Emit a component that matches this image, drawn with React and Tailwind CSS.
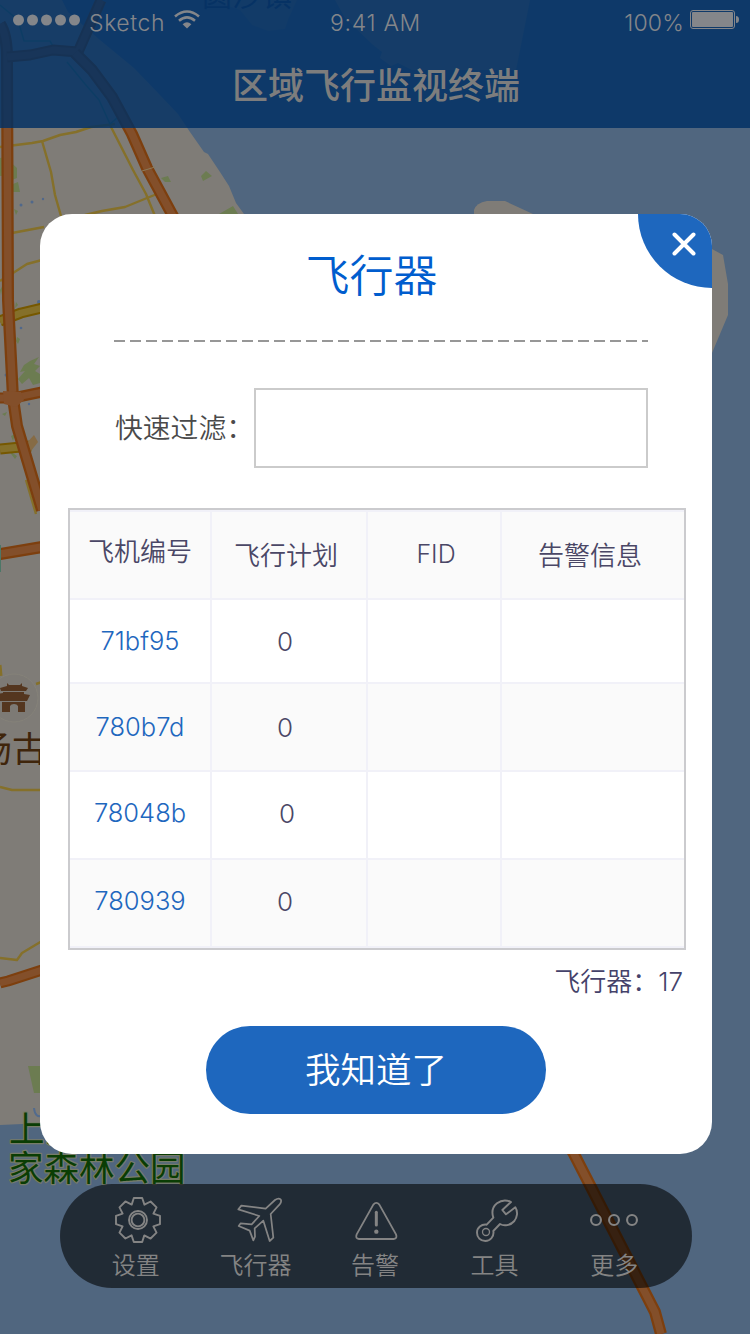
import React from "react";

const SANS = "font-['Inter','Noto_Sans_CJK_SC',sans-serif]";

const gearPoints = Array.from({ length: 8 }, (_, i) => {
  const a = (i * Math.PI) / 4;
  return [[-6.3, -15.4], [-4.2, -22], [4.2, -22]]
    .map(([x, y]) => `${(x * Math.cos(a) - y * Math.sin(a)).toFixed(2)},${(x * Math.sin(a) + y * Math.cos(a)).toFixed(2)}`)
    .join(" ");
}).join(" ");

function Road({ d, width = 9, core = "#834f2a", edge = "#7d3f0e" }) {
  return (
    <g fill="none" strokeLinejoin="round">
      <path d={d} stroke={edge} strokeWidth={width} />
      <path d={d} stroke={core} strokeWidth={width * 0.62} />
    </g>
  );
}

function MapBackdrop() {
  return (
    <svg className="absolute inset-0" width="750" height="1334" viewBox="0 0 750 1334" fontFamily="'Noto Sans CJK SC', sans-serif">
      <rect width="750" height="1334" fill="#50667f" />
      <path d="M0 0H62L68 12L100 40L134 68L160 95L178 114L190 132L204 152L208 154L220 172L229 186L236 203L244 214V1154H140L45 1123L0 1125Z" fill="#7f7c77" />
      <path d="M335 0L345 18L372 44L382 52L380 58L391 66L398 63L412 70H516L530 0Z" fill="#7f7c77" opacity=".8" />
      <path d="M210 0L240 10L252 25L268 31L285 29L288 20L297 0Z" fill="#7f7c77" opacity=".4" />
      <path d="M474 210Q476 203 487 201H505L533 214V225H474Z" fill="#7f7c77" />
      <path d="M700 240L712 249L723 255L728 284V315L712 353H700Z" fill="#7f7c77" />
      <g fill="#6c7c51">
        <path d="M0 158L5 157L17 168V178L12 180L9 168L4 176H0ZM13 184L18 182L20 192H12ZM14 209L18 211L16 215ZM161 178L168 176L171 182H165ZM201 176L206 171L212 176L203 181ZM219 214L233 206L238 214Z" />
        <path d="M20 372L24 365L30 361L39 357L34 364L40 366L35 371L40 374V383L33 385L29 378L22 384L18 379L25 371ZM16 302L18 305L15 308ZM17 337L20 339L18 344L16 341ZM2 414L7 412L5 416ZM11 436L15 434L13 441ZM8 450L17 456L15 459ZM0 290L3 285L1 295Z" />
        <path d="M28 1066H48V1093H34Z" />
      </g>
      <g fill="#50688b">
        <circle cx="21" cy="205" r="1.5" /><circle cx="32" cy="202" r="1.5" /><circle cx="43" cy="199" r="1.2" />
        <circle cx="21" cy="328" r="1.3" /><circle cx="39" cy="302" r="2" /><circle cx="29" cy="404" r="1.2" /><circle cx="6" cy="375" r="1.5" />
      </g>
      <g fill="none" stroke="#85702a" strokeWidth="2.4" strokeLinejoin="round">
        <path d="M0 147L32 143L43 141L60 135L76 132L91 127L115 124" />
        <path d="M42 141L51 172L55 195L61 216" />
        <path d="M110 125L133 170L146 194L155 216" />
        <path d="M85 215L102 211L125 207L147 198L157 194" />
        <path d="M12 233L44 227M0 281L13 273L27 264L42 260" />
        <path d="M0 787L12 790H42M36 684L42 682" />
        <path d="M0 958L17 960L22 953L42 941" />
        <path d="M26 480L36 514" />
        <path d="M0 665L1 676" strokeWidth="3" />
      </g>
      <g fill="none" stroke="#4c7767" strokeWidth="1.6">
        <path d="M0 5L18 20L24 41H50L54 48M67 62L85 84L99 100L110 124L117 118" />
      </g>
      <Road d="M0 321L21 313L42 308" width={11} core="#85702a" edge="#765800" />
      <Road d="M0 449L31 446" width={11} core="#85702a" edge="#765800" />
      <path d="M24 446L34 435L38 442L31 451Z" fill="#866b45" />
      <Road d="M0 24Q7 35 7 58L8 300L13 398L17 426L42 510" width={12} />
      <Road d="M7 57L30 55L53 50L78 52L101 0" width={11} />
      <Road d="M75 53L92 70L112 97L132 134L147 168L174 218" width={12} />
      <path d="M142 171L155 167" stroke="#8d7a59" strokeWidth="1" />
      <Road d="M0 398H13L42 392" width={11} />
      <path d="M3 391L21 392L24 400L16 407L4 404Z" fill="#834f2a" />
      <Road d="M0 554L42 547" width={12} />
      <Road d="M0 983L8 981L42 970" width={11} />
      <Road d="M560 1130L574 1154L655 1312L661 1334" width={12} />
      <path d="M0 545V572" stroke="#4c7767" strokeWidth="2" />
      <circle cx="14" cy="698" r="24" fill="#7d7a75" stroke="#858279" strokeWidth="1" />
      <path d="M7 683L9 685H20L22 683V686L28 688L26 691H1L0 688L7 686ZM3 692H24V694L30 695L27 701H-2V694L3 693ZM2 702H25V712H18V706Q17 704 14 704T10 706V712H2Z" fill="#54361f" />
      <text x="-23" y="762" fontSize="35" fill="#3f250b">场古</text>
      <text x="202" y="6" fontSize="30" fill="#263f66">圆沙镇</text>
      <path d="M34 1108Q35 1118 42 1116" fill="none" stroke="#526b8e" strokeWidth="2" />
      <g fontSize="35.5" fill="#0a3d04" stroke="#777c68" strokeWidth="2.4" strokeLinejoin="round" paintOrder="stroke">
        <text x="9" y="1142">上海国</text>
        <text x="8" y="1181">家森林公园</text>
      </g>
    </svg>
  );
}

function StatusBar() {
  return (
    <div className="grid h-10 grid-cols-3 items-center px-[13px] pt-[6px] text-2xl/6 text-[#84868a]">
      <div className="flex items-center">
        <svg width="68" height="12" viewBox="0 0 68 12" className="mb-[6px]" fill="#84868a">
          {[5.5, 19.5, 33.5, 47.5, 61.5].map((x) => <circle key={x} cx={x} cy="6" r="5.5" />)}
        </svg>
        <span className="ml-2 text-[23px] font-[350] tracking-[0.6px]">Sketch</span>
        <svg width="26" height="19" viewBox="0 0 26 19" className="mb-[7px] ml-[9px]" fill="none" stroke="#84868a" strokeWidth="2.6">
          <path d="M1 6.5Q13 -3.5 25 6.5M5 10.8Q13 4 21 10.8" />
          <path d="M8.6 14.2Q13 10.5 17.4 14.2L13 18.4Z" fill="#84868a" stroke="none" />
        </svg>
      </div>
      <span className="pl-px text-center text-[23px] font-[350] tracking-[0.7px]">9:41 AM</span>
      <div className="flex items-center justify-end">
        <span className="text-[23px] font-[350] tracking-[0.2px]">100%</span>
        <svg width="50" height="19" viewBox="0 0 50 19" className="-mr-[3px] mb-[7px] ml-[6px]">
          <rect x=".5" y=".5" width="44" height="18" rx="2.5" fill="none" stroke="#84868a" />
          <rect x="2" y="2" width="41" height="15" rx="1" fill="#84868a" />
          <path d="M46 6Q49 6 49 9.5T46 13Z" fill="#84868a" />
        </svg>
      </div>
    </div>
  );
}

const svgBase = { width: 50, height: 50, fill: "none", stroke: "#848484", strokeLinejoin: "round", strokeLinecap: "round" };

const navItems = [
  {
    label: "设置",
    icon: (
      <svg {...svgBase} viewBox="-27 -25 50 50" strokeWidth="1.9">
        <polygon points={gearPoints} />
        <circle r="9" /><circle r="6.4" />
      </svg>
    ),
  },
  {
    label: "飞行器",
    icon: (
      <svg {...svgBase} viewBox="91 135 150 150" overflow="visible" strokeWidth="5.2">
        <path d="M198 176L226 150Q236 143 243 148Q247 155 240 163L213 192L221 263L210 273L191 212L165 235L166 260L161 271L150 242L117 228L123 220L156 223L179 198L116 178L125 167Z" />
      </svg>
    ),
  },
  {
    label: "告警",
    icon: (
      <svg {...svgBase} viewBox="452 135 150 150" strokeWidth="5.5">
        <path d="M522 164Q531 153 540 164L590 253Q595 266 583 267H479Q467 266 472 253Z" />
        <path d="M531 187V225" strokeWidth="9" />
        <circle cx="531" cy="245" r="6.5" fill="#848484" stroke="none" />
      </svg>
    ),
  },
  {
    label: "工具",
    icon: (
      <svg {...svgBase} viewBox="60 135 150 150" strokeWidth="5.8">
        <path d="M183 156L157 180L168 193L196 172C205 186 201 203 193 213C181 227 162 229 150 222L130 243C133 259 121 273 106 273C91 273 81 262 81 248C81 233 94 222 110 224L130 203C124 185 130 169 141 160C154 150 171 150 183 156Z" />
        <circle cx="108" cy="246" r="10.5" strokeWidth="4" />
      </svg>
    ),
  },
  {
    label: "更多",
    icon: (
      <svg {...svgBase} viewBox="417 135 150 150" strokeWidth="6.3">
        <circle cx="438" cy="210" r="14.8" /><circle cx="492" cy="210" r="14.8" /><circle cx="546" cy="210" r="14.8" />
      </svg>
    ),
  },
];

function BottomNav() {
  return (
    <nav className="mb-[46px] ml-[60px] mt-auto grid h-[104px] w-[632px] grid-cols-5 rounded-full bg-black/58 pl-4 pr-[18px] pt-[11px]">
      {navItems.map((item) => (
        <button key={item.label} className="flex flex-col items-center">
          {item.icon}
          <span className="mt-[3px] text-2xl/9 font-[350] text-[#848484]">{item.label}</span>
        </button>
      ))}
    </nav>
  );
}

const rows = [
  { id: "71bf95", plan: "0", row: "h-[84px] bg-white", shift: "pr-2" },
  { id: "780b7d", plan: "0", row: "h-[88px] bg-[#fafafa]", shift: "pr-2" },
  { id: "78048b", plan: "0", row: "h-[88px] bg-white", shift: "pr-1 pb-1", lift: "pb-1" },
  { id: "780939", plan: "0", row: "h-[88px] bg-[#fafafa]", shift: "pr-2 pb-1", lift: "pb-1" },
];

const line = "grid grid-cols-[142px_156px_134px_182px] border-b-2 border-[#f1f1f8]";
const cell = "flex items-center justify-center border-r-2 border-[#f1f1f8]";

function AircraftTable() {
  return (
    <div className="ml-7 mt-10 w-[618px] border-2 border-[#cbcbce] text-[26px] font-[350] text-[#4a4766]">
      <div className={`${line} h-[90px] border-t-2 bg-[#fafafa]`}>
        <div className={`${cell} pb-[7px]`}>飞机编号</div>
        <div className={`${cell} pr-[6px]`}>飞行计划</div>
        <div className={`${cell} pb-px pl-1 text-[25px]`}>FID</div>
        <div className="flex items-center justify-center pr-[6px]">告警信息</div>
      </div>
      {rows.map((r) => (
        <div key={r.id} className={`${line} ${r.row}`}>
          <div className={`${cell} text-[25.5px] text-[#1e67be] ${r.lift || ""}`}>{r.id}</div>
          <div className={`${cell} ${r.shift}`}>{r.plan}</div>
          <div className={cell} />
          <div />
        </div>
      ))}
    </div>
  );
}

function Modal() {
  return (
    <section className="absolute left-10 top-[214px] flex h-[940px] w-[672px] flex-col overflow-hidden rounded-[32px] bg-white">
      <button aria-label="关闭" className="absolute right-0 top-0 h-[74px] w-[74px] rounded-bl-full bg-[#1e67be] pb-[14px] pl-[34px]">
        <svg width="24" height="24" viewBox="0 0 24 24" fill="none" stroke="white" strokeWidth="4" strokeLinecap="round">
          <path d="M2.5 2.5L21.5 21.5M21.5 2.5L2.5 21.5" />
        </svg>
      </button>
      <h2 className="mt-[29px] pr-[9px] text-center text-[44px]/[66px] font-[350] text-[#005dce]">飞行器</h2>
      <div className="ml-[74px] mt-[31px] h-[2px] w-[534px] bg-[repeating-linear-gradient(90deg,#979797_0px,#979797_11.5px,transparent_11.5px,transparent_16px)]" />
      <div className="ml-[74px] mt-[46px] flex h-20 w-[534px] items-center justify-between">
        <label htmlFor="filter" className="pl-px pt-[2px] text-[27.8px] font-[350] text-[#4a4a4a]">快速过滤：</label>
        <input id="filter" className="h-20 w-[394px] shrink-0 border-2 border-[#cbcbcb] bg-white px-3 text-[28px] outline-none" />
      </div>
      <AircraftTable />
      <p className="mr-[29px] mt-[14px] text-right text-[26px]/9 font-[350] text-[#45426a]">飞行器：17</p>
      <button className="ml-[166px] mt-[26px] h-[88px] w-[340px] rounded-full bg-[#1e67be] pt-[2px] text-[35.5px] font-[350] text-white">我知道了</button>
    </section>
  );
}

export default function App() {
  return (
    <main className={`relative flex h-[1334px] w-[750px] flex-col overflow-hidden ${SANS}`}>
      <MapBackdrop />
      <div className="relative flex h-full flex-col">
        <header className="h-32 bg-[#002f64]/82">
          <StatusBar />
          <h1 className="mt-[19px] pl-[2px] text-center text-4xl/[54px] font-medium text-[#7d7d7d]">区域飞行监视终端</h1>
        </header>
        <BottomNav />
      </div>
      <Modal />
    </main>
  );
}
